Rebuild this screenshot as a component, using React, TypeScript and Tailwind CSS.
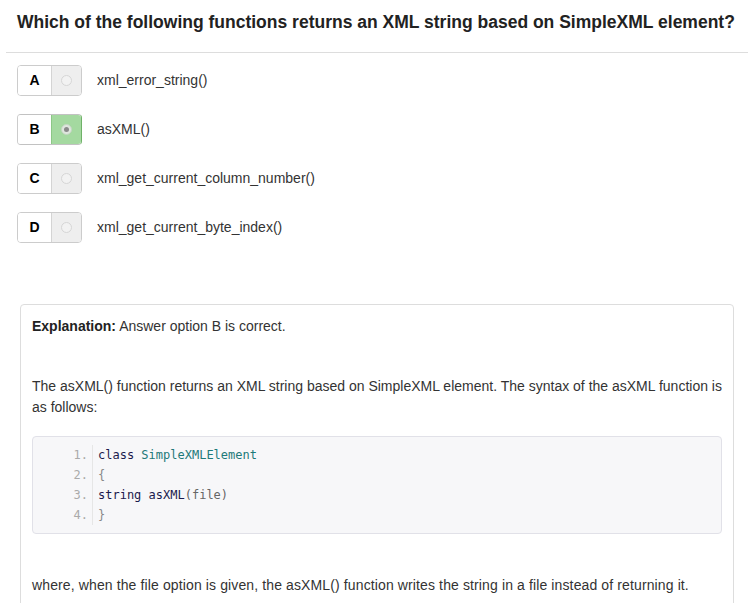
import React from 'react';

const options = [
  { key: 'A', text: 'xml_error_string()' },
  { key: 'B', text: 'asXML()', selected: true },
  { key: 'C', text: 'xml_get_current_column_number()' },
  { key: 'D', text: 'xml_get_current_byte_index()' },
];

const OptionRow = ({ letter, text, selected }: { letter: string; text: string; selected?: boolean }) => (
  <div className="flex items-center gap-[15px]">
    <div
      className={
        selected
          ? 'flex h-[31px] w-[65px] rounded-[4px] border border-[#ccc] border-r-[#6fb168] border-y-[#c2c2c2] overflow-hidden'
          : 'flex h-[31px] w-[65px] rounded-[4px] border border-[#ccc] overflow-hidden'
      }
    >
      <div className="w-[33px] flex items-center justify-center bg-white text-[14px] font-bold text-black">
        {letter}
      </div>
      <div
        className={
          selected
            ? 'flex-1 flex items-center justify-center bg-[#a4d9a0] border-l border-[#8cc786]'
            : 'flex-1 flex items-center justify-center bg-[#eeeeee] border-l border-[#d4d4d4]'
        }
      >
        <span
          className={
            selected
              ? 'h-[11px] w-[11px] rounded-full border border-[#c4d6c2] bg-[#dfe6de] flex items-center justify-center'
              : 'h-[11px] w-[11px] rounded-full border border-[#d6d6d6] bg-[#f2f2f2]'
          }
        >
          {selected && <span className="h-[5px] w-[5px] rounded-full bg-[#8a8a8a]" />}
        </span>
      </div>
    </div>
    <span className="text-[14px] text-[#333]">{text}</span>
  </div>
);

const codeLines = [
  <>
    <span className="text-[#1b1b4d]">class</span> <span className="text-[#1e7a7a]">SimpleXMLElement</span>
  </>,
  <span className="text-[#888]">{'{'}</span>,
  <>
    <span className="text-[#1b1b4d]">string asXML</span>
    <span className="text-[#666]">(file)</span>
  </>,
  <span className="text-[#888]">{'}'}</span>,
];

export default function App() {
  return (
    <div className="w-[754px] h-[603px] overflow-hidden bg-white font-['Liberation_Sans',Arial,sans-serif] text-[#333]">
      <h3 className="px-[17px] pt-[10px] text-[17.5px] leading-[24px] font-bold text-[#222]">
        Which of the following functions returns an XML string based on SimpleXML element?
      </h3>
      <hr className="mx-[6px] mt-[18px] border-t border-[#ddd]" />

      <div className="flex flex-col gap-[18px] pl-[17px] pt-[12px]">
        {options.map((o) => (
          <OptionRow key={o.key} letter={o.key} text={o.text} selected={o.selected} />
        ))}
      </div>

      <div className="mx-[20px] mt-[61px] rounded-[4px] border border-[#ddd] px-[11px] pt-[11px] pb-[20px] text-[14px] leading-[21px]">
        <p>
          <b className="text-[#222]">Explanation:</b> Answer option B is correct.
        </p>
        <p className="mt-[39px]">
          The asXML() function returns an XML string based on SimpleXML element. The syntax of the asXML function is
          as follows:
        </p>
        <div className="mt-[18px] flex rounded-[4px] border border-[#e1e1e8] bg-[#f7f7f9] py-[8px] font-['DejaVu_Sans_Mono',monospace] text-[12px] leading-[20px]">
          <div className="w-[60px] pr-[4px] text-right text-[#aaa] border-r border-[#e6e6e6]">
            {codeLines.map((_, i) => (
              <div key={i}>{i + 1}.</div>
            ))}
          </div>
          <div className="pl-[5px]">
            {codeLines.map((l, i) => (
              <div key={i}>{l}</div>
            ))}
          </div>
        </div>
        <p className="mt-[41px] tracking-[0.12px]">
          where, when the file option is given, the asXML() function writes the string in a file instead of returning it.
        </p>
      </div>
    </div>
  );
}
